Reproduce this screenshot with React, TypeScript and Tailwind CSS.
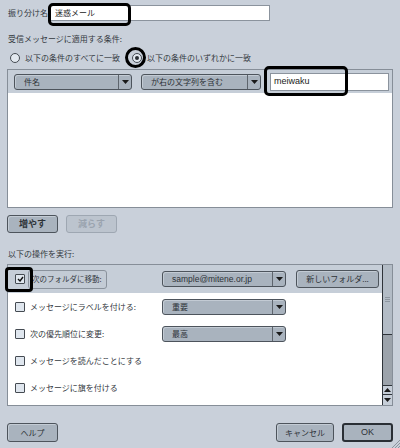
import React from "react"

const jp = "font-['Noto_Sans_CJK_JP','Liberation_Sans',sans-serif]"

function Arrow() {
  return (
    <svg width="7" height="4" viewBox="0 0 7 4">
      <path d="M0 0H7L3.5 4Z" fill="#1a1a1a" />
    </svg>
  )
}

function Select({ label, className, latin }: { label: string; className: string; latin?: boolean }) {
  return (
    <div
      className={`flex h-[16px] shrink-0 rounded-[3px] border border-[#4d545c] bg-[#a9b3be] shadow-[inset_1px_1px_0_#c3cbd4] ${className}`}
    >
      <div
        className={`flex-1 truncate pl-[9px] leading-[14px] text-[#2d3237] ${
          latin ? "font-['Liberation_Sans',sans-serif] text-[8.5px]" : "text-[8px]"
        }`}
      >
        {label}
      </div>
      <div className="flex w-[13px] items-center justify-center border-l border-[#5e656d]">
        <Arrow />
      </div>
    </div>
  )
}

function Checkbox({ checked }: { checked?: boolean }) {
  return (
    <div className="flex h-[10px] w-[10px] shrink-0 items-center justify-center rounded-[1px] border border-[#454b52] bg-[#dfe6ee]">
      {checked && (
        <svg width="7" height="6" viewBox="0 0 7 6">
          <path d="M1 3L3 5L6 1" stroke="#111" strokeWidth="1.4" fill="none" />
        </svg>
      )}
    </div>
  )
}

function Radio({ on }: { on?: boolean }) {
  return (
    <div className="flex h-[10px] w-[10px] shrink-0 items-center justify-center rounded-full border border-[#454b52] bg-[#e3e9f0]">
      {on && <div className="h-[4px] w-[4px] rounded-full bg-[#2a2f35]" />}
    </div>
  )
}

function Button({
  children,
  className,
  disabled,
  def,
}: {
  children: React.ReactNode
  className: string
  disabled?: boolean
  def?: boolean
}) {
  return (
    <div
      className={`flex shrink-0 items-center justify-center rounded-[3px] ${
        disabled
          ? "border border-[#9ea7b2] bg-[#bcc4ce] text-[#9aa3ae]"
          : def
            ? "border-2 border-[#2a2f35] bg-[#a9b3be] text-[#2d3237]"
            : "border border-[#4d545c] bg-[#a9b3be] text-[#2d3237] shadow-[inset_1px_1px_0_#c3cbd4]"
      } ${className}`}
    >
      {children}
    </div>
  )
}

const actions = [
  { label: "メッセージにラベルを付ける:", select: "重要" },
  { label: "次の優先順位に変更:", select: "最高" },
  { label: "メッセージを読んだことにする" },
  { label: "メッセージに旗を付ける" },
]

export default function App() {
  return (
    <div
      className={`relative h-[448px] w-[400px] overflow-hidden whitespace-nowrap bg-[#c9d0da] text-[8px] text-[#33383e] ${jp}`}
    >
      {/* filter name */}
      <div className="mt-[5px] flex h-[16px] items-center pl-[8px]">
        <div className="w-[42px] shrink-0">振り分け名:</div>
        <div className="h-[16px] w-[220px] border border-[#8b939d] bg-white pl-[4px] leading-[14px] text-[#222]">
          迷惑メール
        </div>
      </div>

      <div className="mt-[12px] h-[12px] pl-[8px] leading-[12px]">受信メッセージに適用する条件:</div>

      <div className="mt-[7px] flex h-[12px] items-center pl-[10px]">
        <Radio />
        <span className="ml-[5px] w-[107px]">以下の条件のすべてに一致</span>
        <Radio on />
        <span className="ml-[5px]">以下の条件のいずれかに一致</span>
      </div>

      {/* conditions */}
      <div className="ml-[7px] mt-[5px] flex h-[139px] w-[386px] flex-col border border-[#868e98] bg-white">
        <div className="flex h-[23px] items-center gap-[9px] bg-[#c6ced8] pl-[6px]">
          <Select label="件名" className="w-[118px]" />
          <Select label="が右の文字列を含む" className="w-[120px]" />
          <div className="h-[18px] w-[119px] border border-[#8b939d] bg-white pl-[3px] font-['Liberation_Sans',sans-serif] text-[9px] leading-[15px] text-[#222]">
            meiwaku
          </div>
        </div>
      </div>

      <div className="mt-[7px] flex h-[18px] gap-[8px] pl-[7px]">
        <Button className="w-[51px] text-[9px] font-bold">増やす</Button>
        <Button className="w-[51px] text-[9px] font-bold" disabled>
          減らす
        </Button>
      </div>

      <div className="mt-[15px] h-[12px] pl-[8px] leading-[12px]">以下の操作を実行:</div>

      {/* actions */}
      <div className="ml-[7px] mt-[4px] flex h-[142px] w-[386px] border border-[#868e98] bg-white">
        <div className="flex flex-1 flex-col">
          <div className="flex h-[28px] items-center bg-[#c6ced8] pl-[7px]">
            <Checkbox checked />
            <div className="ml-[3px] flex h-[19px] w-[79px] shrink-0 items-center rounded-[3px] border border-[#8a929c] bg-[#c3cbd5] pl-[3px] text-[7.5px]">
              次のフォルダに移動:
            </div>
            <Select label="sample@mitene.or.jp" className="ml-[55px] w-[124px]" latin />
            <Button className="ml-[10px] h-[18px] w-[83px] text-[8px]">新しいフォルダ...</Button>
          </div>
          {actions.map((a) => (
            <div key={a.label} className="flex h-[27px] items-center pl-[7px]">
              <Checkbox />
              <span className="ml-[5px] w-[132px] shrink-0">{a.label}</span>
              {a.select && <Select label={a.select} className="w-[124px]" />}
            </div>
          ))}
        </div>

        {/* scrollbar */}
        <div className="flex w-[10px] flex-col border-l border-[#2f343a]">
          <div className="flex h-[70px] flex-col items-center justify-center gap-[1px] border-b border-[#2f343a] bg-[#b3bcc6]">
            <div className="h-px w-[5px] bg-[#8d96a0]" />
            <div className="h-px w-[5px] bg-[#8d96a0]" />
            <div className="h-px w-[5px] bg-[#8d96a0]" />
          </div>
          <div className="flex-1 bg-[#9ca3ab]" />
          <div className="flex h-[10px] items-center justify-center border-y border-[#2f343a] bg-[#c6ced8]">
            <svg width="7" height="4" viewBox="0 0 7 4">
              <path d="M0 4H7L3.5 0Z" fill="#1a1a1a" />
            </svg>
          </div>
          <div className="flex h-[10px] items-center justify-center bg-[#c6ced8]">
            <Arrow />
          </div>
        </div>
      </div>

      {/* bottom buttons */}
      <div className="mt-[17px] flex h-[19px] pl-[7px] pr-[7px]">
        <Button className="w-[51px]">ヘルプ</Button>
        <div className="flex-1" />
        <Button className="w-[58px]">キャンセル</Button>
        <Button className="ml-[8px] w-[51px] font-['Liberation_Sans',sans-serif] text-[9px]" def>
          OK
        </Button>
      </div>

      {/* resize grip */}
      <svg className="absolute bottom-0 right-0" width="10" height="10" viewBox="0 0 10 10">
        <path d="M10 2L2 10M10 5L5 10M10 8L8 10" stroke="#8c949e" strokeWidth="1" />
      </svg>

      {/* highlight marks */}
      <div className="absolute left-[48px] top-[3px] h-[23px] w-[83px] rounded-[5px] border-[3px] border-black" />
      <div className="absolute left-[125px] top-[47px] h-[21px] w-[21px] rounded-full border-[3px] border-black" />
      <div className="absolute left-[264px] top-[66px] h-[30px] w-[84px] rounded-[5px] border-[3px] border-black" />
      <div className="absolute left-[5px] top-[267px] h-[25px] w-[28px] rounded-[4px] border-[3px] border-black" />
    </div>
  )
}
